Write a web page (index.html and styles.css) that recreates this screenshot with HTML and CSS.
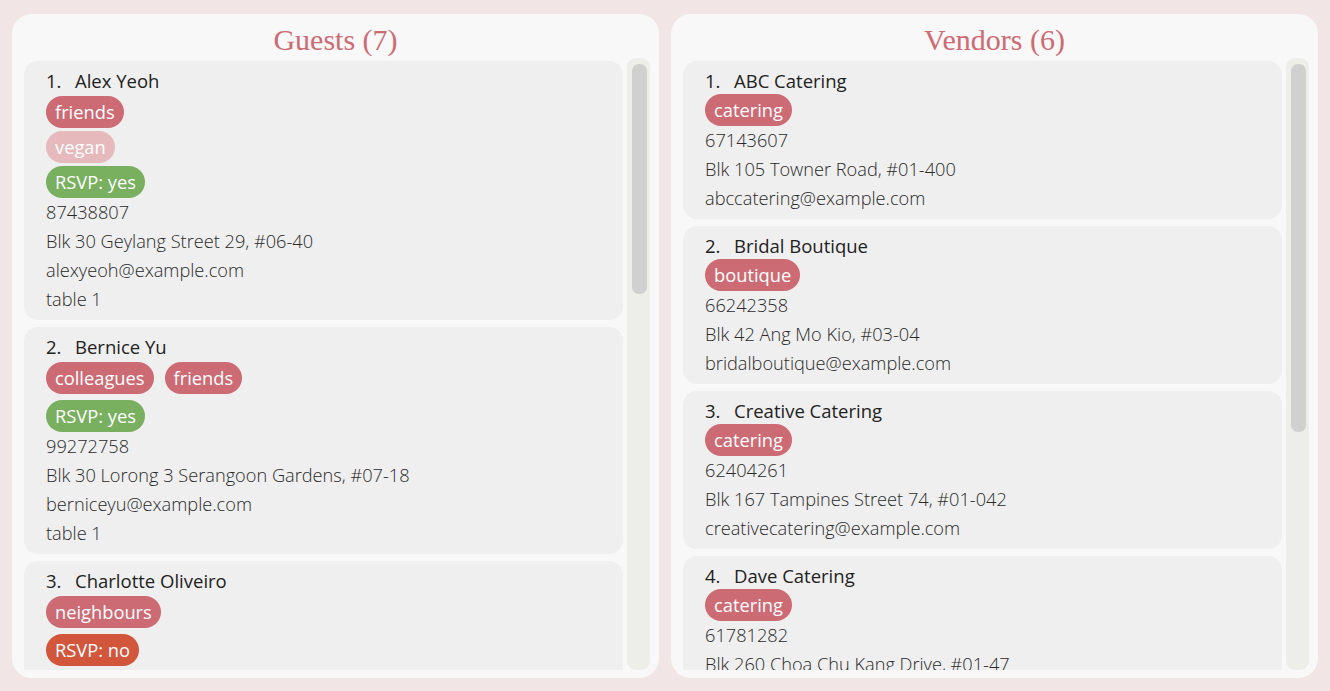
FILE: index.html
```html
<!DOCTYPE html>
<html>
<head>
<meta charset="utf-8">
<link rel="stylesheet" href="styles.css">
</head>
<body>
<div class="app">
  <section class="panel">
    <h1 class="title">Guests (7)</h1>
    <div class="list">
      <div class="cards">
        <div class="card">
          <div class="name"><span class="idx">1.</span>Alex Yeoh</div>
          <div class="row first"><span class="tag">friends</span></div>
          <div class="row"><span class="tag diet">vegan</span></div>
          <div class="row"><span class="tag yes">RSVP: yes</span></div>
          <div class="line">87438807</div>
          <div class="line">Blk 30 Geylang Street 29, #06-40</div>
          <div class="line">alexyeoh@example.com</div>
          <div class="line">table 1</div>
        </div>
        <div class="card">
          <div class="name"><span class="idx">2.</span>Bernice Yu</div>
          <div class="row first"><span class="tag">colleagues</span><span class="tag">friends</span></div>
          <div class="row"></div>
          <div class="row"><span class="tag yes">RSVP: yes</span></div>
          <div class="line">99272758</div>
          <div class="line">Blk 30 Lorong 3 Serangoon Gardens, #07-18</div>
          <div class="line">berniceyu@example.com</div>
          <div class="line">table 1</div>
        </div>
        <div class="card last">
          <div class="name"><span class="idx">3.</span>Charlotte Oliveiro</div>
          <div class="row first"><span class="tag">neighbours</span></div>
          <div class="row"></div>
          <div class="row"><span class="tag no">RSVP: no</span></div>
        </div>
      </div>
      <div class="scrollbar"><div class="thumb guests-thumb"></div></div>
    </div>
  </section>
  <section class="panel">
    <h1 class="title">Vendors (6)</h1>
    <div class="list">
      <div class="cards">
        <div class="card">
          <div class="name"><span class="idx">1.</span>ABC Catering</div>
          <div class="row vfirst"><span class="tag">catering</span></div>
          <div class="line">67143607</div>
          <div class="line">Blk 105 Towner Road, #01-400</div>
          <div class="line">abccatering@example.com</div>
        </div>
        <div class="card">
          <div class="name"><span class="idx">2.</span>Bridal Boutique</div>
          <div class="row vfirst"><span class="tag">boutique</span></div>
          <div class="line">66242358</div>
          <div class="line">Blk 42 Ang Mo Kio, #03-04</div>
          <div class="line">bridalboutique@example.com</div>
        </div>
        <div class="card">
          <div class="name"><span class="idx">3.</span>Creative Catering</div>
          <div class="row vfirst"><span class="tag">catering</span></div>
          <div class="line">62404261</div>
          <div class="line">Blk 167 Tampines Street 74, #01-042</div>
          <div class="line">creativecatering@example.com</div>
        </div>
        <div class="card last">
          <div class="name"><span class="idx">4.</span>Dave Catering</div>
          <div class="row vfirst"><span class="tag">catering</span></div>
          <div class="line">61781282</div>
          <div class="line">Blk 260 Choa Chu Kang Drive, #01-47</div>
        </div>
      </div>
      <div class="scrollbar"><div class="thumb vendors-thumb"></div></div>
    </div>
  </section>
</div>
</body>
</html>
```
FILE: styles.css
```css
* { box-sizing: border-box; }
html, body { margin: 0; padding: 0; }
body {
  background: #f2e5e5;
  font-family: "Open Sans", "Noto Sans", sans-serif;
  width: 1330px;
  height: 691px;
  overflow: hidden;
}
.app {
  display: flex;
  gap: 12px;
  padding: 14px 12px 13px 12px;
  height: 691px;
}
.panel {
  flex: 1;
  min-width: 0;
  background: #f8f8f8;
  border-radius: 20px;
  padding: 0 9px 8px 12px;
  display: flex;
  flex-direction: column;
}
.title {
  margin: 0 0 0 -3px;
  height: 44px;
  padding-top: 7px;
  line-height: 37px;
  font-family: "Liberation Serif", "Times New Roman", serif;
  font-weight: normal;
  font-size: 30px;
  color: #cd6b74;
  text-align: center;
}
.list {
  flex: 1;
  min-height: 0;
  display: flex;
  gap: 4px;
}
.cards {
  flex: 1;
  min-width: 0;
  padding-top: 3px;
  display: flex;
  flex-direction: column;
  gap: 7px;
  overflow: hidden;
}
.card {
  flex: none;
  background: #efefef;
  border-radius: 14px;
  padding: 9px 22px 6px 22px;
}
.card.last {
  flex: 1 0 auto;
  border-radius: 14px 14px 0 0;
}
.name {
  font-size: 18.5px;
  line-height: 22px;
  color: #222;
  white-space: nowrap;
}
.idx {
  display: inline-block;
  width: 29px;
}
.row {
  display: flex;
  gap: 11px;
  margin-top: 3px;
}
.row.first { margin-top: 4px; }
.row.vfirst { margin-top: 2px; }
.tag {
  height: 32px;
  line-height: 32px;
  padding: 0 9px;
  border-radius: 16px;
  background: #cd6b74;
  color: #fff;
  font-size: 18.3px;
  white-space: nowrap;
}
.tag.diet { background: #e6b9bd; }
.tag.yes { background: #78b060; }
.tag.no { background: #d2563c; }
.line {
  font-size: 18.2px;
  font-weight: 300;
  line-height: 29px;
  color: #2a2a2a;
  white-space: nowrap;
}
.scrollbar {
  flex: none;
  width: 23px;
  background: #ededea;
  border-radius: 9px;
  padding: 6px 3px 0 5px;
}
.thumb {
  background: #d0d0d0;
  border-radius: 7px;
}
.guests-thumb { height: 230px; }
.vendors-thumb { height: 368px; }
```
